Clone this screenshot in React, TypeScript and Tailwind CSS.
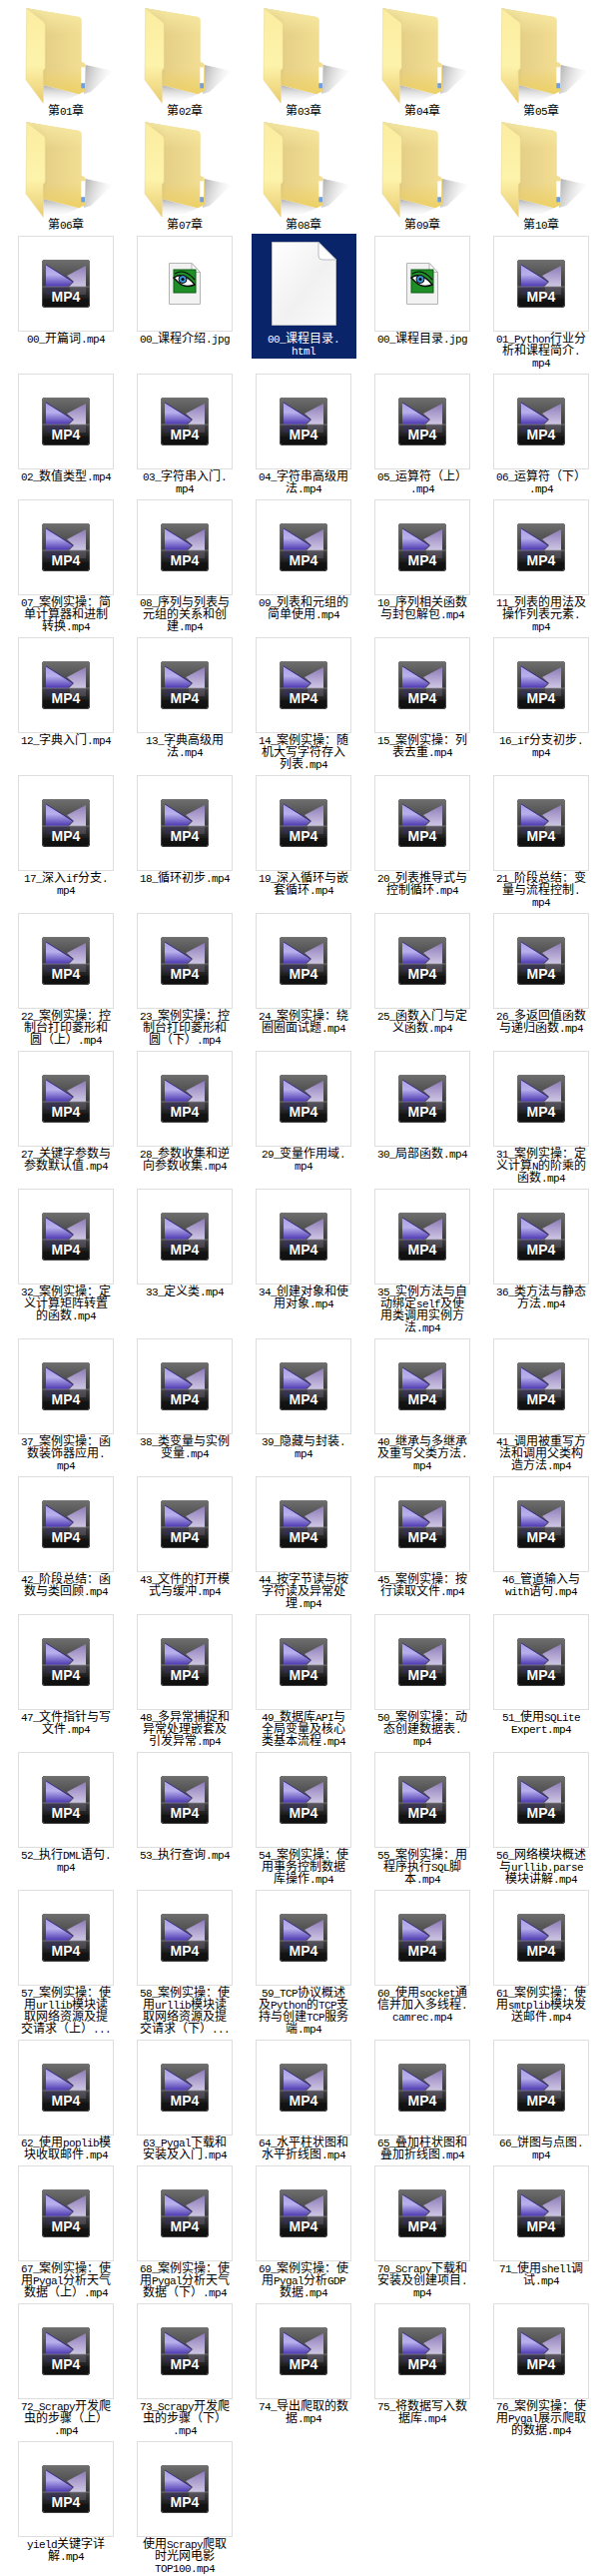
import React from 'react';
import { clsx } from 'clsx';

type Kind = 'folder' | 'mp4' | 'jpg' | 'html';

interface Item {
  label: string;
  kind: Kind;
}

const v = (...labels: string[]): Item[] => labels.map((label) => ({ label, kind: 'mp4' }));

const items: Item[] = [
  ...['第01章', '第02章', '第03章', '第04章', '第05章', '第06章', '第07章', '第08章', '第09章', '第10章'].map(
    (label): Item => ({ label, kind: 'folder' })
  ),
  { label: '00_开篇词.mp4', kind: 'mp4' },
  { label: '00_课程介绍.jpg', kind: 'jpg' },
  { label: '00_课程目录.|html', kind: 'html' },
  { label: '00_课程目录.jpg', kind: 'jpg' },
  ...v(
    '01_Python行业分|析和课程简介.|mp4',
    '02_数值类型.mp4',
    '03_字符串入门.|mp4',
    '04_字符串高级用|法.mp4',
    '05_运算符（上）|.mp4',
    '06_运算符（下）|.mp4',
    '07_案例实操：简|单计算器和进制|转换.mp4',
    '08_序列与列表与|元组的关系和创|建.mp4',
    '09_列表和元组的|简单使用.mp4',
    '10_序列相关函数|与封包解包.mp4',
    '11_列表的用法及|操作列表元素.|mp4',
    '12_字典入门.mp4',
    '13_字典高级用|法.mp4',
    '14_案例实操：随|机大写字符存入|列表.mp4',
    '15_案例实操：列|表去重.mp4',
    '16_if分支初步.|mp4',
    '17_深入if分支.|mp4',
    '18_循环初步.mp4',
    '19_深入循环与嵌|套循环.mp4',
    '20_列表推导式与|控制循环.mp4',
    '21_阶段总结：变|量与流程控制.|mp4',
    '22_案例实操：控|制台打印菱形和|圆（上）.mp4',
    '23_案例实操：控|制台打印菱形和|圆（下）.mp4',
    '24_案例实操：绕|圈圈面试题.mp4',
    '25_函数入门与定|义函数.mp4',
    '26_多返回值函数|与递归函数.mp4',
    '27_关键字参数与|参数默认值.mp4',
    '28_参数收集和逆|向参数收集.mp4',
    '29_变量作用域.|mp4',
    '30_局部函数.mp4',
    '31_案例实操：定|义计算N的阶乘的|函数.mp4',
    '32_案例实操：定|义计算矩阵转置|的函数.mp4',
    '33_定义类.mp4',
    '34_创建对象和使|用对象.mp4',
    '35_实例方法与自|动绑定self及使|用类调用实例方|法.mp4',
    '36_类方法与静态|方法.mp4',
    '37_案例实操：函|数装饰器应用.|mp4',
    '38_类变量与实例|变量.mp4',
    '39_隐藏与封装.|mp4',
    '40_继承与多继承|及重写父类方法.|mp4',
    '41_调用被重写方|法和调用父类构|造方法.mp4',
    '42_阶段总结：函|数与类回顾.mp4',
    '43_文件的打开模|式与缓冲.mp4',
    '44_按字节读与按|字符读及异常处|理.mp4',
    '45_案例实操：按|行读取文件.mp4',
    '46_管道输入与|with语句.mp4',
    '47_文件指针与写|文件.mp4',
    '48_多异常捕捉和|异常处理嵌套及|引发异常.mp4',
    '49_数据库API与|全局变量及核心|类基本流程.mp4',
    '50_案例实操：动|态创建数据表.|mp4',
    '51_使用SQLite|Expert.mp4',
    '52_执行DML语句.|mp4',
    '53_执行查询.mp4',
    '54_案例实操：使|用事务控制数据|库操作.mp4',
    '55_案例实操：用|程序执行SQL脚|本.mp4',
    '56_网络模块概述|与urllib.parse|模块讲解.mp4',
    '57_案例实操：使|用urllib模块读|取网络资源及提|交请求（上）...',
    '58_案例实操：使|用urllib模块读|取网络资源及提|交请求（下）...',
    '59_TCP协议概述|及Python的TCP支|持与创建TCP服务|端.mp4',
    '60_使用socket通|信并加入多线程.|camrec.mp4',
    '61_案例实操：使|用smtplib模块发|送邮件.mp4',
    '62_使用poplib模|块收取邮件.mp4',
    '63_Pygal下载和|安装及入门.mp4',
    '64_水平柱状图和|水平折线图.mp4',
    '65_叠加柱状图和|叠加折线图.mp4',
    '66_饼图与点图.|mp4',
    '67_案例实操：使|用Pygal分析天气|数据（上）.mp4',
    '68_案例实操：使|用Pygal分析天气|数据（下）.mp4',
    '69_案例实操：使|用Pygal分析GDP|数据.mp4',
    '70_Scrapy下载和|安装及创建项目.|mp4',
    '71_使用shell调|试.mp4',
    '72_Scrapy开发爬|虫的步骤（上）|.mp4',
    '73_Scrapy开发爬|虫的步骤（下）|.mp4',
    '74_导出爬取的数|据.mp4',
    '75_将数据写入数|据库.mp4',
    '76_案例实操：使|用Pygal展示爬取|的数据.mp4',
    'yield关键字详|解.mp4',
    '使用Scrapy爬取|时光网电影|TOP100.mp4'
  ),
];

// latin runs squeezed to 6px per char, half of the 12px hanzi, like the old bitmap font
function LabelLine({ text }: { text: string }) {
  const runs = text.match(/[\x20-\x7e]+|[^\x20-\x7e]+/g) ?? [];
  return (
    <div className="h-3 whitespace-nowrap text-center leading-3">
      {runs.map((run, i) =>
        /^[\x20-\x7e]/.test(run) ? (
          <span key={i} className="font-['Liberation_Mono',monospace] text-[11px] tracking-[-0.6px]">
            {run}
          </span>
        ) : (
          <span key={i}>{run}</span>
        )
      )}
    </div>
  );
}

function Mp4Icon() {
  return (
    <div className="relative size-12 overflow-hidden rounded-[3px] bg-gradient-to-b from-[#2a2a2a] to-[#0f0f0f]">
      <svg viewBox="0 0 48 48" className="absolute inset-0 size-12">
        <defs>
          <linearGradient id="mp4-top" x1="0" y1="0" x2="0" y2="1">
            <stop offset="0" stopColor="#6f6f6f" />
            <stop offset="1" stopColor="#3a3a3a" />
          </linearGradient>
          <linearGradient id="mp4-left" x1="0" y1="0" x2="0" y2="1">
            <stop offset="0" stopColor="#a89fe6" />
            <stop offset="0.45" stopColor="#b7b0ec" />
            <stop offset="1" stopColor="#4a35b0" />
          </linearGradient>
          <linearGradient id="mp4-right" x1="0" y1="0" x2="0" y2="1">
            <stop offset="0" stopColor="#8d7bb8" />
            <stop offset="1" stopColor="#cfc6e4" />
          </linearGradient>
          <linearGradient id="mp4-fade" x1="0" y1="0" x2="0" y2="1">
            <stop offset="0" stopColor="#6a6a6a" />
            <stop offset="1" stopColor="#222222" />
          </linearGradient>
        </defs>
        <rect x="0" y="0" width="48" height="27" fill="url(#mp4-top)" />
        <rect x="0" y="27" width="48" height="12" fill="url(#mp4-fade)" opacity="0.5" />
        <path d="M44 6 L44 27 L27 27 L32 22 L25 16 Z" fill="url(#mp4-right)" />
        <path d="M4 5 L31 22 L26 27 L4 27 Z" fill="url(#mp4-left)" />
        <path d="M4 5 L31 22" stroke="#2a1c7a" strokeWidth="0.8" fill="none" />
        <path d="M4 27 L26 27 L22 35 L4 35 Z" fill="#3a2f7a" opacity="0.35" />
        <path d="M28 27 L44 27 L44 35 L28 35 Z" fill="#9a90b8" opacity="0.25" />
        <rect x="0" y="26.5" width="48" height="1" fill="#8a8a8a" opacity="0.7" />
        <rect x="0.5" y="0.5" width="47" height="47" rx="3" fill="none" stroke="#7a7a7a" strokeOpacity="0.5" />
      </svg>
      <span className="absolute inset-x-0 top-[30px] text-center font-['Liberation_Sans',sans-serif] text-sm leading-[14px] font-bold text-white [text-shadow:0_0_1px_#000]">
        MP4
      </span>
    </div>
  );
}

function FolderIcon() {
  return (
    <svg viewBox="18 8 96 96" className="size-24">
      <defs>
        <linearGradient id="fold-back" x1="0" y1="0" x2="1" y2="0">
          <stop offset="0" stopColor="#bda35f" />
          <stop offset="0.35" stopColor="#e6d088" />
          <stop offset="1" stopColor="#f3df94" />
        </linearGradient>
        <linearGradient id="fold-top" x1="0" y1="0" x2="0" y2="1">
          <stop offset="0" stopColor="#f8eca6" stopOpacity="0.9" />
          <stop offset="0.3" stopColor="#f8eca6" stopOpacity="0" />
          <stop offset="0.7" stopColor="#ecce60" stopOpacity="0" />
          <stop offset="1" stopColor="#ecce60" stopOpacity="0.9" />
        </linearGradient>
        <linearGradient id="fold-door" x1="0" y1="0" x2="0" y2="1">
          <stop offset="0" stopColor="#fbeda0" />
          <stop offset="0.6" stopColor="#fdf3ab" />
          <stop offset="1" stopColor="#e9cb6e" />
        </linearGradient>
        <linearGradient id="fold-shadow" x1="0" y1="0" x2="1" y2="0.3">
          <stop offset="0" stopColor="#8f8f8f" stopOpacity="0.75" />
          <stop offset="1" stopColor="#d8d8d8" stopOpacity="0" />
        </linearGradient>
        <linearGradient id="fold-under" x1="0" y1="0" x2="0" y2="1">
          <stop offset="0" stopColor="#8f8f8f" stopOpacity="0.7" />
          <stop offset="1" stopColor="#e4e4e4" stopOpacity="0" />
        </linearGradient>
      </defs>
      <path d="M86 65 L113 71 L91 92 L84 94 Z" fill="url(#fold-shadow)" />
      <path d="M43.3 85 L79 94.5 L66 100 L43.3 103.3 Z" fill="url(#fold-under)" />
      <path
        d="M26.7 8.3 L78.3 16.7 Q81.7 17.4 81.7 20.7 L81.7 61.7 L85 63.5 Q86 64.2 86 66 L86 90 Q86 91.5 84 92 L81.7 92.7 L79.3 94.3 L43.3 85 Z"
        fill="url(#fold-back)"
      />
      <path
        d="M26.7 8.3 L78.3 16.7 Q81.7 17.4 81.7 20.7 L81.7 61.7 L85 63.5 Q86 64.2 86 66 L86 90 Q86 91.5 84 92 L81.7 92.7 L79.3 94.3 L43.3 85 Z"
        fill="url(#fold-top)"
      />
      <rect x="81.3" y="67.3" width="3.7" height="16" fill="#ffffff" />
      <rect x="81.3" y="83.3" width="3.7" height="5" fill="#6f9fe0" />
      <path
        d="M26.7 8.3 L44 22 Q45.3 23.3 45.3 25 L45.3 68.3 L43.3 70.7 L43.3 103.3 L26 80 Z"
        fill="url(#fold-door)"
        stroke="#e6d48c"
        strokeWidth="0.5"
      />
    </svg>
  );
}

function JpgIcon() {
  return (
    <div className="flex h-[42px] w-8 items-center">
      <svg viewBox="0 0 32 42" className="h-[42px] w-8">
        <path d="M0.5 0.5 L23 0.5 L31.5 9.5 L31.5 41.5 L0.5 41.5 Z" fill="#f2f2f2" stroke="#b4b4b4" />
        <path d="M23 0.5 L23 9.5 L31.5 9.5 Z" fill="#ffffff" stroke="#b4b4b4" />
        <rect x="5" y="7" width="22" height="23" fill="#1d8f26" stroke="#0b5a12" />
        <path d="M5 15 Q15 8 26 22 Q16 26 9 19 Z" fill="#ffffff" stroke="#0a0a0a" strokeWidth="1.4" />
        <circle cx="14" cy="16.5" r="4" fill="#3f93d6" stroke="#0a0a0a" />
        <circle cx="14" cy="16.5" r="1.5" fill="#0a0a0a" />
        <path d="M6 11 Q16 5 26 17" fill="none" stroke="#0a0a0a" strokeWidth="1.2" />
      </svg>
    </div>
  );
}

function HtmlIcon() {
  return (
    <svg viewBox="0 0 65 84" className="h-[84px] w-[65px]">
      <defs>
        <linearGradient id="page" x1="0" y1="0" x2="1" y2="1">
          <stop offset="0" stopColor="#ffffff" />
          <stop offset="0.55" stopColor="#f1f1f1" />
          <stop offset="1" stopColor="#fafafa" />
        </linearGradient>
      </defs>
      <path d="M0.5 0.5 L47 0.5 L64.5 18 L64.5 83.5 L0.5 83.5 Z" fill="url(#page)" stroke="#b9bcc4" />
      <path d="M47 0.5 L47 14 Q47 18 51 18 L64.5 18 Z" fill="#ffffff" stroke="#b9bcc4" />
    </svg>
  );
}

function FileCell({ label, kind }: Item) {
  const selected = kind === 'html';
  const lines = label.split('|');
  return (
    <div className="pb-1.5">
      <div className={clsx(selected && '-mx-1 -mt-0.5 mr-[-5px] h-[125px] bg-[#0a246a] pt-0.5 text-white')}>
        <div
          className={clsx(
            'flex h-24 w-24 items-center justify-center',
            selected && 'mx-1',
            (kind === 'mp4' || kind === 'jpg') && 'border border-[#dedede] bg-white'
          )}
        >
          {kind === 'mp4' && <Mp4Icon />}
          {kind === 'jpg' && <JpgIcon />}
          {kind === 'html' && <HtmlIcon />}
          {kind === 'folder' && <FolderIcon />}
        </div>
        <div className={clsx('w-24', selected && 'mx-1')}>
          {lines.map((line, i) => (
            <LabelLine key={i} text={line} />
          ))}
        </div>
      </div>
    </div>
  );
}

export default function App() {
  return (
    <div className="min-h-[2579px] w-[611px] bg-white pt-2 pl-[18px] font-['Noto_Sans_CJK_SC','Liberation_Sans',sans-serif] text-xs text-black">
      <div className="grid grid-cols-[repeat(5,96px)] gap-x-[23px]">
        {items.map((item, i) => (
          <FileCell key={i} label={item.label} kind={item.kind} />
        ))}
      </div>
    </div>
  );
}
